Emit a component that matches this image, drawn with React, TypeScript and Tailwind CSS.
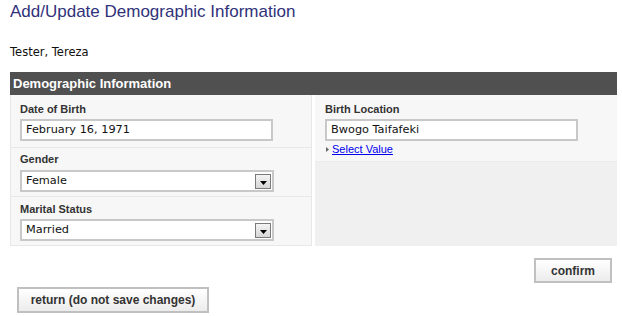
import React from "react";

const label = "font-['Liberation_Sans',Arial,sans-serif] font-bold text-[11px] leading-[13px] text-[#333]";
const field =
  "h-[22px] border-2 border-[#c8c8c8] bg-white px-[4px] flex items-center text-[11.3px] text-[#111] font-['DejaVu_Sans',Verdana,sans-serif]";

function DropArrow() {
  return (
    <div className="w-[16px] h-[15px] border-[1.5px] border-[#7a7a7a] bg-gradient-to-b from-[#f4f4f4] to-[#d6d6d6] flex items-end justify-center pb-[3px]">
      <svg width="7" height="4" viewBox="0 0 7 4">
        <path d="M0 0h7L3.5 4z" fill="#000" />
      </svg>
    </div>
  );
}

function Select({ value }: { value: string }) {
  return (
    <div className={`${field} w-[254px] justify-between pr-[1px]`}>
      <span>{value}</span>
      <DropArrow />
    </div>
  );
}

export default function App() {
  return (
    <div className="w-[622px] h-[316px] bg-white overflow-hidden font-['DejaVu_Sans',Verdana,sans-serif] text-black">
      <h1 className="pl-[10px] pt-[2px] text-[17px] leading-[20px] text-[#30327a] font-['Liberation_Sans',Arial,sans-serif]">
        Add/Update Demographic Information
      </h1>
      <div className="pl-[10px] mt-[24px] text-[11.5px] leading-[13px] text-[#111]">Tester, Tereza</div>

      <div className="ml-[10px] w-[607px] mt-[13px]">
        <div className="h-[23px] bg-[#505050] text-white font-bold text-[13px] px-[3px] flex items-center font-['Liberation_Sans',Arial,sans-serif]">
          Demographic Information
        </div>

        <div className="flex gap-[3px]">
          {/* left column */}
          <div className="w-[302px] bg-[#f7f7f7] border-x border-[#e8e8e8]">
            <div className="h-[53px] pt-[8px] pl-[9px] border-b border-[#e8e8e8]">
              <div className={label}>Date of Birth</div>
              <div className={`${field} w-[253px] mt-[3px]`}>February 16, 1971</div>
            </div>
            <div className="h-[49px] pt-[5px] pl-[9px] border-b border-[#e8e8e8]">
              <div className={label}>Gender</div>
              <div className="mt-[4px]">
                <Select value="Female" />
              </div>
            </div>
            <div className="h-[49px] pt-[6px] pl-[9px] border-b border-[#e8e8e8]">
              <div className={label}>Marital Status</div>
              <div className="mt-[3px]">
                <Select value="Married" />
              </div>
            </div>
          </div>

          {/* right column */}
          <div className="flex-1 flex flex-col bg-[#f0f0f0]">
            <div className="h-[67px] bg-[#f7f7f7] border-b border-[#ececec] pt-[8px] pl-[10px]">
              <div className={label}>Birth Location</div>
              <div className={`${field} w-[253px] mt-[3px]`}>Bwogo Taifafeki</div>
              <div className="flex items-center gap-[3px] mt-[2px] pl-[1px]">
                <svg width="3" height="5" viewBox="0 0 3 5">
                  <path d="M0 0l3 2.5L0 5z" fill="#666" />
                </svg>
                <a href="#" className="text-[11px] leading-[13px] text-[#0000ee] underline font-['Liberation_Sans',Arial,sans-serif]">
                  Select Value
                </a>
              </div>
            </div>
          </div>
        </div>

        <div className="flex justify-end pr-[5px] mt-[12px]">
          <button className="w-[78px] h-[25px] border-2 border-[#c0c0c0] bg-gradient-to-b from-white to-[#ececec] text-[12px] font-bold text-[#333] font-['Liberation_Sans',Arial,sans-serif]">
            confirm
          </button>
        </div>
        <div className="mt-[4px] pl-[7px]">
          <button className="w-[192px] h-[26px] border-2 border-[#c0c0c0] bg-gradient-to-b from-white to-[#ececec] text-[12px] font-bold text-[#333] font-['Liberation_Sans',Arial,sans-serif]">
            return (do not save changes)
          </button>
        </div>
      </div>
    </div>
  );
}
